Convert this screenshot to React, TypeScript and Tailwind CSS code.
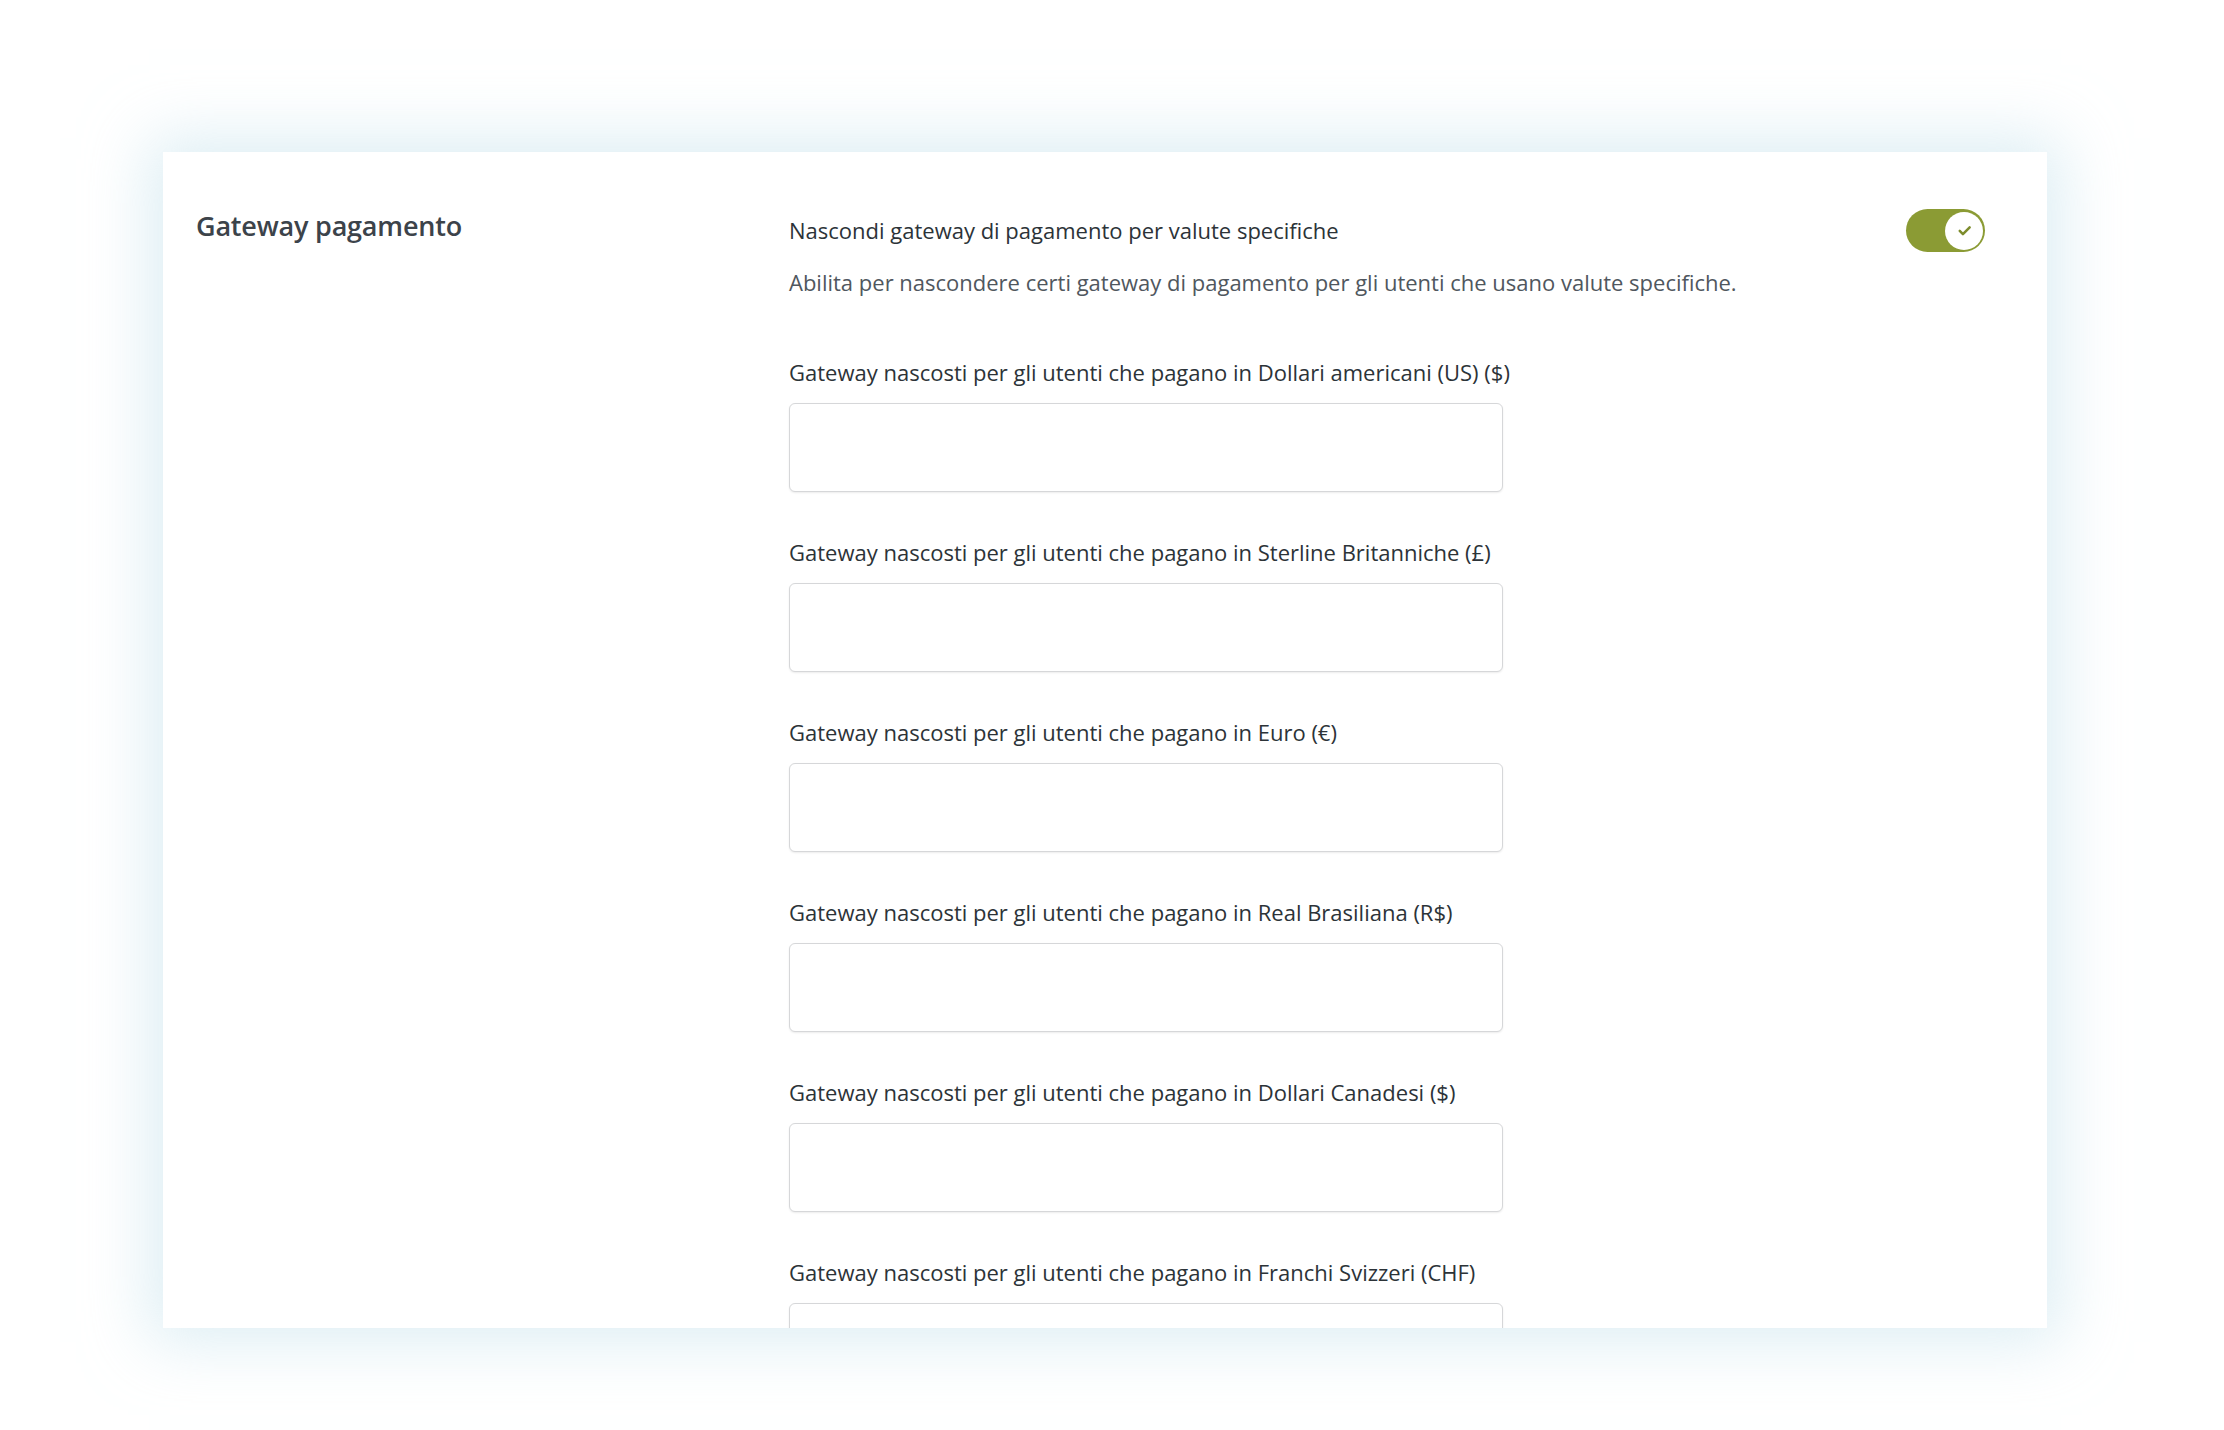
import React from "react";

const labels = [
  "Gateway nascosti per gli utenti che pagano in Dollari americani (US) ($)",
  "Gateway nascosti per gli utenti che pagano in Sterline Britanniche (£)",
  "Gateway nascosti per gli utenti che pagano in Euro (€)",
  "Gateway nascosti per gli utenti che pagano in Real Brasiliana (R$)",
  "Gateway nascosti per gli utenti che pagano in Dollari Canadesi ($)",
  "Gateway nascosti per gli utenti che pagano in Franchi Svizzeri (CHF)",
];

function Toggle() {
  return (
    <div className="flex h-[43px] w-[79px] items-center justify-end rounded-full bg-[#8b9b34] pr-[2px]">
      <div className="flex h-[38px] w-[38px] items-center justify-center rounded-full bg-white">
        <svg width="19" height="19" viewBox="0 0 24 24" fill="none">
          <path d="M6 12.5l4 4L18.5 8" stroke="#7d8c2c" strokeWidth="3.2" strokeLinecap="round" strokeLinejoin="round" />
        </svg>
      </div>
    </div>
  );
}

export default function App() {
  return (
    <div
      className="min-h-[1430px] w-[2224px] bg-white pl-[163px] pt-[152px]"
      style={{ fontFamily: '"Open Sans", "Noto Sans", sans-serif' }}
    >
      <div className="h-[1176px] w-[1884px] overflow-hidden bg-white shadow-[0_0_60px_14px_rgba(198,226,236,0.6)]">
        <div className="flex pl-[33px] pr-[62px] pt-[57px]">
          <div className="w-[593px] shrink-0">
            <h2 className="-mt-[4px] flex h-[43px] items-center text-[27px] font-semibold tracking-[-0.2px] text-[#3c434a]">
              Gateway pagamento
            </h2>
          </div>
          <div className="flex-1">
            <div className="flex h-[43px] items-center justify-between">
              <span className="text-[22px] text-[#2c3338]">
                Nascondi gateway di pagamento per valute specifiche
              </span>
              <Toggle />
            </div>
            <p className="mt-[16px] h-[28px] text-[22px] leading-[28px] text-[#50575e]">
              Abilita per nascondere certi gateway di pagamento per gli utenti che usano valute specifiche.
            </p>
            <div className="mt-[62px] flex flex-col">
              {labels.map((l) => (
                <div key={l} className="mb-[46px] flex flex-col">
                  <label className="h-[28px] text-[22px] leading-[28px] text-[#2c3338]">
                    {l}
                  </label>
                  <div className="mt-[17px] h-[89px] w-[714px] rounded-[6px] border border-[#d6d7d9] bg-white shadow-[0_1px_2px_rgba(0,0,0,0.08)]" />
                </div>
              ))}
            </div>
          </div>
        </div>
      </div>
    </div>
  );
}
